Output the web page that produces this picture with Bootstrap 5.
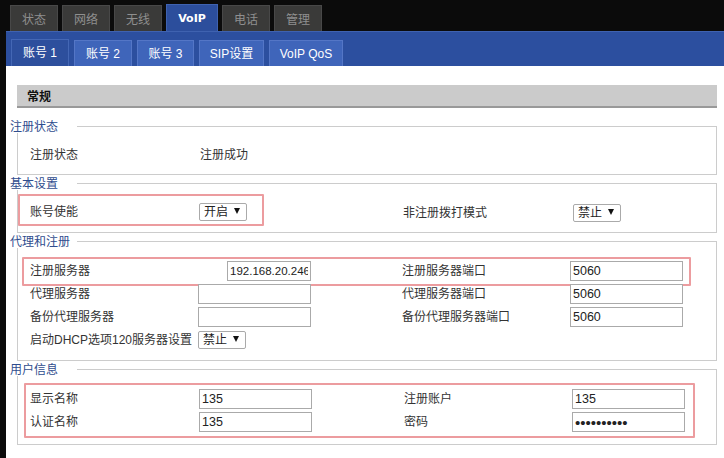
<!DOCTYPE html>
<html lang="zh-CN">
<head>
  <meta charset="UTF-8">
  <title>VoIP</title>
  <link href="https://cdn.jsdelivr.net/npm/bootstrap@5.3.0/dist/css/bootstrap.min.css" rel="stylesheet">
  <style>
    html, body { height: 458px; overflow: hidden; }
    body {
      background: #0b0b0b;
      font-family: "Liberation Sans", "Noto Sans CJK SC", sans-serif;
      font-size: 12px;
      line-height: 14px;
      color: #333;
    }
    .top-tabs { height: 31px; padding: 4px 0 0 10px; align-items: flex-end; gap: 4px; }
    .top-tab {
      width: 48px; height: 26px; line-height: 29px; text-align: center;
      background: #3a3a39; color: #8f8f8f; font-size: 12px;
      text-decoration: none;
      border: 1px solid #484848; border-bottom: 0;
    }
    .top-tab.on {
      width: 52px; height: 27px; line-height: 27px; background: #2c4e9c; border-color: #3f62b0;
      color: #fff; font-weight: 700; font-family: "DejaVu Sans", sans-serif; font-size: 11px;
    }
    .shell { margin-left: 6px; background: #fff; height: 427px; }
    .sub-tabs { height: 35px; background: #2c4f9f; padding: 6px 0 0 5px; align-items: flex-end; gap: 5px; border-top: 1px solid #3f62b0; }
    .sub-tab {
      height: 26px; line-height: 26px; text-align: center; color: #fff;
      background: #3f65ba; text-decoration: none;
      border: 1px solid #5476c6; border-bottom: 0;
    }
    .sub-tab.on { height: 27px; background: #2d4f9d; border-color: #4467b5; }
    .w-a { width: 58px; }
    .w-b { width: 57px; }
    .w-c { width: 65px; }
    .w-d { width: 74px; }
    .page-title {
      margin: 19px 7px 0 11px; height: 23px; line-height: 25px; padding-left: 10px;
      background: #cbcbcb; border-bottom: 2px solid #999;
      font-weight: 700; color: #111;
    }
    .page-body { padding-right: 7px; padding-left: 4px; padding-top: 11px; }
    .grp { margin-bottom: 1px; }
    .grp-head { height: 14px; display: flex; }
    .grp-name { width: 67px; color: #2f4d8e; line-height: 17px; white-space: nowrap; }
    .grp-line { flex: 1; margin-top: 7px; border-top: 1px solid #ccc; border-right: 1px solid #ccc; }
    .grp-body { margin-left: 7px; border: 1px solid #ccc; border-top: 0; }
    .grp-status { height: 42px; padding: 15px 0 0 12px; }
    .grp-basic { height: 43px; padding-top: 4px; }
    .grp-proxy { height: 113px; padding: 9px 0 0 12px; }
    .grp-user { height: 69px; padding: 7px 0 0 6px; }
    .pink { border: 2px solid #ec9c9f; border-radius: 1px; }
    .pink-basic { width: 246px; height: 32px; padding: 6px 0 0 10px; }
    .pink-proxy { width: 669px; height: 29px; margin: 0 0 -2px -8px; padding: 2px 0 0 6px; }
    .pink-user { width: 671px; height: 55px; padding: 4px 0 0 4px; }
    .fld { display: grid; align-items: center; height: 20px; }
    .fld-proxy { grid-template-columns: 168px 204px 168px 113px; margin-bottom: 3px; position: relative; }
    .fld-pinked { grid-template-columns: 168px 204px 168px 113px; }
    .fld-user { grid-template-columns: 169px 205px 168px 113px; margin-bottom: 3px; }
    .txt {
      width: 113px; height: 20px; padding: 0 2px; font-size: 12.5px; color: #222;
      background: #fff; border: 1px solid #aaa; border-radius: 0; outline: none;
      font-family: inherit;
    }
    .txt[type=password] { font-size: 15px; letter-spacing: 0; }
    .txt-short { width: 84px; margin-left: 29px; font-size: 11.5px; }
    .pick { position: relative; display: inline-block; width: 48px; height: 18px; }
    .pick select {
      appearance: none; display: block; width: 48px; height: 18px; padding: 0 0 0 4px;
      border: 1px solid #aaa; border-radius: 2px; background: #fff;
      font-size: 12px; line-height: 16px; color: #222; font-family: inherit;
    }
    .pick::after {
      content: ""; position: absolute; right: 7px; top: 5px;
      border-left: 3px solid transparent; border-right: 3px solid transparent; border-top: 6px solid #111;
    }
    .lab-first { width: 170px; }
    .basic-lab { width: 169px; padding-top: 3px; }
    .basic-pick { margin-top: 1px; }
    .side-lab { width: 170px; margin: 12px 0 0 139px; }
    .side-pick { margin-top: 10px; }
  </style>
</head>
<body>
  <div class="top-tabs d-flex">
    <a class="top-tab" href="#">状态</a>
    <a class="top-tab" href="#">网络</a>
    <a class="top-tab" href="#">无线</a>
    <a class="top-tab on" href="#">VoIP</a>
    <a class="top-tab" href="#">电话</a>
    <a class="top-tab" href="#">管理</a>
  </div>
  <div class="shell">
    <div class="sub-tabs d-flex">
      <a class="sub-tab on w-a" href="#">账号 1</a>
      <a class="sub-tab w-a" href="#">账号 2</a>
      <a class="sub-tab w-b" href="#">账号 3</a>
      <a class="sub-tab w-c" href="#">SIP设置</a>
      <a class="sub-tab w-d" href="#">VoIP QoS</a>
    </div>
    <div class="page-title">常规</div>
    <div class="page-body">
      <div class="grp">
        <div class="grp-head"><div class="grp-name">注册状态</div><div class="grp-line"></div></div>
        <div class="grp-body grp-status d-flex">
          <div class="lab-first">注册状态</div>
          <div>注册成功</div>
        </div>
      </div>
      <div class="grp">
        <div class="grp-head"><div class="grp-name">基本设置</div><div class="grp-line"></div></div>
        <div class="grp-body grp-basic d-flex align-items-start">
          <div class="pink pink-basic d-flex align-items-start">
            <div class="basic-lab">账号使能</div>
            <span class="pick basic-pick"><select><option>开启</option></select></span>
          </div>
          <div class="side-lab">非注册拨打模式</div>
          <span class="pick side-pick"><select><option>禁止</option></select></span>
        </div>
      </div>
      <div class="grp">
        <div class="grp-head"><div class="grp-name">代理和注册</div><div class="grp-line"></div></div>
        <div class="grp-body grp-proxy">
          <div class="pink pink-proxy">
            <div class="fld fld-pinked">
              <div>注册服务器</div><input class="txt txt-short" value="192.168.20.246">
              <div>注册服务器端口</div><input class="txt" value="5060">
            </div>
          </div>
          <div class="fld fld-proxy">
            <div>代理服务器</div><input class="txt" value="">
            <div>代理服务器端口</div><input class="txt" value="5060">
          </div>
          <div class="fld fld-proxy">
            <div>备份代理服务器</div><input class="txt" value="">
            <div>备份代理服务器端口</div><input class="txt" value="5060">
          </div>
          <div class="fld fld-proxy">
            <div class="text-nowrap">启动DHCP选项120服务器设置</div>
            <div><span class="pick"><select><option>禁止</option></select></span></div>
          </div>
        </div>
      </div>
      <div class="grp">
        <div class="grp-head"><div class="grp-name">用户信息</div><div class="grp-line"></div></div>
        <div class="grp-body grp-user">
          <div class="pink pink-user">
            <div class="fld fld-user">
              <div>显示名称</div><input class="txt" value="135">
              <div>注册账户</div><input class="txt" value="135">
            </div>
            <div class="fld fld-user">
              <div>认证名称</div><input class="txt" value="135">
              <div>密码</div><input class="txt" type="password" value="1234567890">
            </div>
          </div>
        </div>
      </div>
    </div>
  </div>
</body>
</html>
